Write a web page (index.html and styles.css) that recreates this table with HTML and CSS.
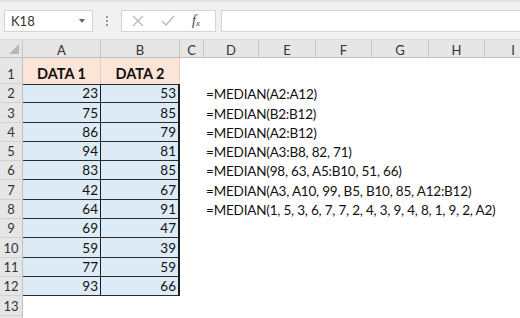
FILE: index.html
```html
<!DOCTYPE html>
<html>
<head>
<meta charset="utf-8">
<link rel="stylesheet" href="styles.css">
</head>
<body>
<div class="app">
  <div class="toolbar">
    <div class="namebox"><span>K18</span><span class="caret"></span></div>
    <div class="dots"><i></i><i></i><i></i></div>
    <div class="fxbox">
      <svg class="ic" width="14" height="14" viewBox="0 0 14 14"><path d="M2 2 L12 12 M12 2 L2 12" stroke="#b8b8b8" stroke-width="1.3" fill="none"/></svg>
      <svg class="ic" width="16" height="14" viewBox="0 0 16 14"><path d="M2 7 L6 11 L14 2" stroke="#b8b8b8" stroke-width="1.3" fill="none"/></svg>
      <span class="fx">f<sub>x</sub></span>
    </div>
    <div class="formula"></div>
  </div>
  <div class="sheet">
    <div class="corner"><span class="tri"></span></div>
    <div class="ch">A</div>
    <div class="ch">B</div>
    <div class="ch">C</div>
    <div class="ch">D</div>
    <div class="ch">E</div>
    <div class="ch">F</div>
    <div class="ch">G</div>
    <div class="ch">H</div>
    <div class="ch last">I</div>

    <div class="rh tall">1</div>
    <div class="hd">DATA 1</div>
    <div class="hd">DATA 2</div>

    <div class="rh">2</div><div class="num first">23</div><div class="num b first">53</div><div class="fm">=MEDIAN(A2:A12)</div>
    <div class="rh">3</div><div class="num">75</div><div class="num b">85</div><div class="fm">=MEDIAN(B2:B12)</div>
    <div class="rh">4</div><div class="num">86</div><div class="num b">79</div><div class="fm">=MEDIAN(A2:B12)</div>
    <div class="rh">5</div><div class="num">94</div><div class="num b">81</div><div class="fm">=MEDIAN(A3:B8, 82, 71)</div>
    <div class="rh">6</div><div class="num">83</div><div class="num b">85</div><div class="fm">=MEDIAN(98, 63, A5:B10, 51, 66)</div>
    <div class="rh">7</div><div class="num">42</div><div class="num b">67</div><div class="fm">=MEDIAN(A3, A10, 99, B5, B10, 85, A12:B12)</div>
    <div class="rh">8</div><div class="num">64</div><div class="num b">91</div><div class="fm">=MEDIAN(1, 5, 3, 6, 7, 7, 2, 4, 3, 9, 4, 8, 1, 9, 2, A2)</div>
    <div class="rh">9</div><div class="num">69</div><div class="num b">47</div>
    <div class="rh">10</div><div class="num">59</div><div class="num b">39</div>
    <div class="rh">11</div><div class="num">77</div><div class="num b">59</div>
    <div class="rh">12</div><div class="num">93</div><div class="num b">66</div>
    <div class="rh">13</div>
    <div class="rh"></div>
  </div>
</div>
</body>
</html>
```
FILE: styles.css
```css
html, body {
  margin: 0;
  padding: 0;
  background: #ffffff;
}
.app {
  width: 520px;
  height: 318px;
  overflow: hidden;
  font-family: Lato, "Open Sans", sans-serif;
}
.toolbar {
  height: 40px;
  box-sizing: border-box;
  background: #f1f1f1;
  border-top: 2px solid #e2e2e2;
  padding: 8px 0 0 4px;
  display: flex;
  align-items: flex-start;
  border-bottom: 1px solid #d8d8d8;
}
.namebox {
  width: 89px;
  height: 22px;
  box-sizing: border-box;
  background: #fff;
  border: 1px solid #d4d4d4;
  display: flex;
  align-items: center;
  justify-content: space-between;
  padding: 0 7px 0 6px;
  font-size: 13px;
  color: #333;
}
.caret {
  width: 0;
  height: 0;
  border-left: 3.5px solid transparent;
  border-right: 3.5px solid transparent;
  border-top: 4px solid #666;
}
.dots {
  width: 28px;
  height: 22px;
  display: flex;
  flex-direction: column;
  align-items: center;
  justify-content: center;
  gap: 2px;
}
.dots i {
  width: 2px;
  height: 2px;
  background: #9a9a9a;
}
.fxbox {
  width: 95px;
  height: 22px;
  box-sizing: border-box;
  background: #fff;
  border: 1px solid #d4d4d4;
  display: flex;
  align-items: center;
  padding-left: 9px;
  gap: 15px;
}
.fx {
  font-family: "Liberation Serif", serif;
  font-style: italic;
  font-size: 14px;
  color: #444;
  margin-left: 1px;
}
.fx sub {
  font-size: 9px;
  vertical-align: -1px;
}
.formula {
  flex: 1;
  height: 22px;
  margin-left: 5px;
  box-sizing: border-box;
  background: #fff;
  border: 1px solid #d4d4d4;
  border-right: none;
}
.sheet {
  display: grid;
  grid-template-columns: 23px 78px 79px 24px 55px 57px 56px 57px 56px 57px;
  grid-template-rows: 18px 26px repeat(13, 19.3px);
}
.corner {
  background: #e6e6e6;
  border-right: 1px solid #c8c8c8;
  border-bottom: 1px solid #c0c0c0;
  position: relative;
}
.tri {
  position: absolute;
  right: 3px;
  bottom: 3px;
  width: 0;
  height: 0;
  border-left: 10px solid transparent;
  border-bottom: 10px solid #b8b8b8;
}
.ch {
  background: #e6e6e6;
  border-right: 1px solid #c8c8c8;
  border-bottom: 1px solid #bdbdbd;
  font-size: 13px;
  color: #333;
  display: flex;
  align-items: center;
  justify-content: center;
  padding-top: 2px;
  box-sizing: border-box;
}
.rh {
  grid-column: 1;
  background: #e6e6e6;
  border-right: 1px solid #c0c0c0;
  border-bottom: 1px solid #d2d2d2;
  font-size: 13px;
  color: #333;
  display: flex;
  align-items: flex-end;
  justify-content: center;
  padding-bottom: 1px;
  box-sizing: border-box;
}
.hd {
  background: #fce4d6;
  font-weight: bold;
  font-size: 14.5px;
  color: #111;
  display: flex;
  align-items: flex-end;
  justify-content: center;
  padding-bottom: 2px;
  border-right: 1px solid #e0cfc4;
}
.num {
  background: #ddebf7;
  border-bottom: 1.5px solid #2a2a2a;
  border-right: 1.5px solid #1e1e1e;
  font-size: 13.5px;
  color: #111;
  display: flex;
  align-items: flex-end;
  justify-content: flex-end;
  padding-right: 2px;
  box-sizing: border-box;
  line-height: 17px;
}
.num.first {
  border-top: 1.5px solid #2a2a2a;
}
.num.b {
  border-right-width: 2px;
}
.fm {
  grid-column: 5 / -1;
  font-size: 13.5px;
  letter-spacing: -0.2px;
  color: #111;
  white-space: nowrap;
  display: flex;
  align-items: flex-end;
  padding-left: 2px;
  line-height: 17px;
}
```
